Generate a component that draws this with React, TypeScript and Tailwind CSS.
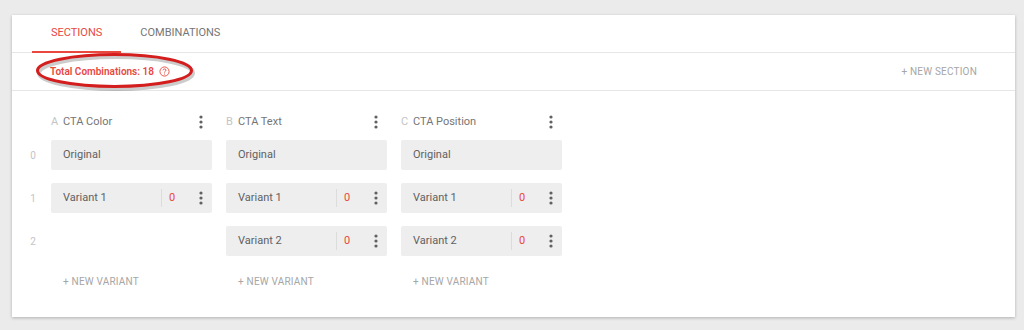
import React from 'react';

const RED = 'text-[#e8483d]';

function Kebab() {
  return (
    <svg width="4" height="14" viewBox="0 0 4 14" className="shrink-0">
      <circle cx="2" cy="2" r="1.6" fill="#616161" />
      <circle cx="2" cy="7" r="1.6" fill="#616161" />
      <circle cx="2" cy="12" r="1.6" fill="#616161" />
    </svg>
  );
}

interface Section {
  letter: string;
  name: string;
  variants: string[];
}

const sections: Section[] = [
  { letter: 'A', name: 'CTA Color', variants: ['Variant 1'] },
  { letter: 'B', name: 'CTA Text', variants: ['Variant 1', 'Variant 2'] },
  { letter: 'C', name: 'CTA Position', variants: ['Variant 1', 'Variant 2'] },
];

function SectionColumn({ section }: { section: Section }) {
  return (
    <div className="w-[161px] flex flex-col">
      {/* Header */}
      <div className="h-[22px] flex items-center justify-between pr-[9px]">
        <div className="flex items-center text-[11px]">
          <span className="text-[#c4c4c4] w-[12px]">{section.letter}</span>
          <span className="text-[#757575]">{section.name}</span>
        </div>
        <Kebab />
      </div>

      {/* Original */}
      <div className="mt-[7px] h-[30px] bg-[#eeeeee] rounded-[2px] flex items-center pl-[12px] text-[11px] text-[#616161]">
        Original
      </div>

      {/* Variants */}
      {section.variants.map((v) => (
        <div
          key={v}
          className="mt-[13px] h-[30px] bg-[#eeeeee] rounded-[2px] flex items-center pl-[12px] pr-[9px] text-[11px] text-[#616161]"
        >
          <span className="flex-1">{v}</span>
          <span className="h-[18px] w-px bg-[#dcdcdc]" />
          <span className={`w-[37px] pl-[7px] ${RED}`}>0</span>
          <Kebab />
        </div>
      ))}
      {section.variants.length < 2 && <div className="mt-[13px] h-[30px]" />}

      <div className="mt-[18px] pl-[12px] text-[10px] text-[#a6a6a6] tracking-[0.02em]">+ NEW VARIANT</div>
    </div>
  );
}

export default function App() {
  return (
    <div
      className="w-[1024px] h-[330px] bg-[#ebebeb] pt-[15px] pl-[12px]"
      style={{ fontFamily: 'Roboto, "Liberation Sans", sans-serif' }}
    >
      <div className="relative w-[1003px] h-[302px] bg-white shadow-[0_1px_3px_rgba(0,0,0,0.25)]">
        {/* Tabs */}
        <div className="h-[38px] flex items-stretch pl-[20px] border-b border-[#e6e6e6]">
          <div className={`relative px-[19px] flex items-center text-[11px] ${RED}`}>
            SECTIONS
            <span className="absolute left-0 right-0 bottom-[-1px] h-[2px] bg-[#e8483d]" />
          </div>
          <div className="px-[19px] flex items-center text-[11px] text-[#757575]">COMBINATIONS</div>
        </div>

        {/* Toolbar */}
        <div className="h-[38px] flex items-center justify-between px-[38px] border-b border-[#e6e6e6]">
          <div className={`flex items-center gap-[5px] text-[10px] font-semibold ${RED}`}>
            <span>Total Combinations: 18</span>
            <svg width="11" height="11" viewBox="0 0 12 12">
              <circle cx="6" cy="6" r="5" fill="none" stroke="#e8483d" strokeWidth="1" />
              <path d="M4.4 4.7 Q4.5 3.2 6 3.2 Q7.6 3.2 7.6 4.6 Q7.6 5.5 6.6 5.9 Q6 6.2 6 7.1" fill="none" stroke="#e8483d" strokeWidth="1" />
              <circle cx="6" cy="8.7" r="0.6" fill="#e8483d" />
            </svg>
          </div>
          <div className="text-[10px] text-[#a6a6a6] tracking-[0.02em]">+ NEW SECTION</div>
        </div>

        {/* Sections grid */}
        <div className="flex pt-[20px]">
          <div className="w-[39px] flex flex-col items-center pl-[3px] text-[10px] text-[#c4c4c4]">
            <div className="h-[22px]" />
            <div className="mt-[7px] h-[30px] flex items-center">0</div>
            <div className="mt-[13px] h-[30px] flex items-center">1</div>
            <div className="mt-[13px] h-[30px] flex items-center">2</div>
          </div>
          <div className="flex gap-[14px]">
            {sections.map((s) => (
              <SectionColumn key={s.letter} section={s} />
            ))}
          </div>
        </div>

        {/* Annotation ellipse */}
        <svg className="absolute left-[10px] top-[30px] pointer-events-none" width="200" height="54" viewBox="0 0 200 54">
          <ellipse cx="94" cy="28" rx="77" ry="16" fill="none" stroke="rgba(0,0,0,0.2)" strokeWidth="4" />
          <ellipse cx="92.5" cy="25.5" rx="77" ry="16" fill="none" stroke="#d41e1e" strokeWidth="3" />
        </svg>
      </div>
    </div>
  );
}
